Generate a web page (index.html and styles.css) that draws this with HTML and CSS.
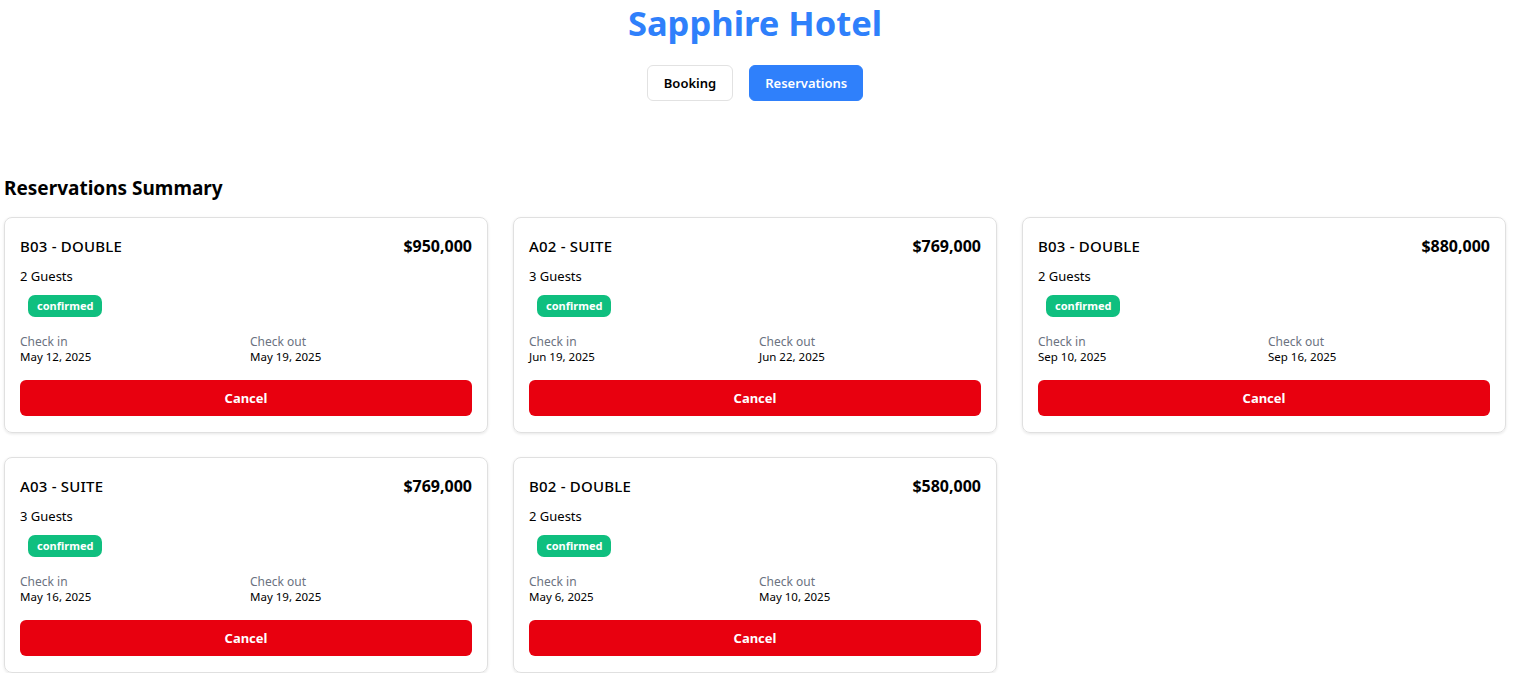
FILE: index.html
```html
<!DOCTYPE html>
<html>
<head>
<meta charset="utf-8">
<link rel="stylesheet" href="styles.css">
</head>
<body>
<div class="app">
<header class="header">
  <h1 class="brand">Sapphire Hotel</h1>
  <nav class="tabs">
    <button class="tab">Booking</button>
    <button class="tab tab-active">Reservations</button>
  </nav>
</header>
<main class="main">
  <h2 class="section-title">Reservations Summary</h2>
  <div class="grid">
    <div class="card">
      <div class="card-head"><span class="room">B03 - DOUBLE</span><span class="price">$950,000</span></div>
      <div class="guests">2 Guests</div>
      <div><span class="badge">confirmed</span></div>
      <div class="dates">
        <div><div class="label">Check in</div><div class="date">May 12, 2025</div></div>
        <div><div class="label">Check out</div><div class="date">May 19, 2025</div></div>
      </div>
      <button class="cancel">Cancel</button>
    </div>
    <div class="card">
      <div class="card-head"><span class="room">A02 - SUITE</span><span class="price">$769,000</span></div>
      <div class="guests">3 Guests</div>
      <div><span class="badge">confirmed</span></div>
      <div class="dates">
        <div><div class="label">Check in</div><div class="date">Jun 19, 2025</div></div>
        <div><div class="label">Check out</div><div class="date">Jun 22, 2025</div></div>
      </div>
      <button class="cancel">Cancel</button>
    </div>
    <div class="card">
      <div class="card-head"><span class="room">B03 - DOUBLE</span><span class="price">$880,000</span></div>
      <div class="guests">2 Guests</div>
      <div><span class="badge">confirmed</span></div>
      <div class="dates">
        <div><div class="label">Check in</div><div class="date">Sep 10, 2025</div></div>
        <div><div class="label">Check out</div><div class="date">Sep 16, 2025</div></div>
      </div>
      <button class="cancel">Cancel</button>
    </div>
    <div class="card">
      <div class="card-head"><span class="room">A03 - SUITE</span><span class="price">$769,000</span></div>
      <div class="guests">3 Guests</div>
      <div><span class="badge">confirmed</span></div>
      <div class="dates">
        <div><div class="label">Check in</div><div class="date">May 16, 2025</div></div>
        <div><div class="label">Check out</div><div class="date">May 19, 2025</div></div>
      </div>
      <button class="cancel">Cancel</button>
    </div>
    <div class="card">
      <div class="card-head"><span class="room">B02 - DOUBLE</span><span class="price">$580,000</span></div>
      <div class="guests">2 Guests</div>
      <div><span class="badge">confirmed</span></div>
      <div class="dates">
        <div><div class="label">Check in</div><div class="date">May 6, 2025</div></div>
        <div><div class="label">Check out</div><div class="date">May 10, 2025</div></div>
      </div>
      <button class="cancel">Cancel</button>
    </div>
  </div>
</main>
</div>
</body>
</html>
```

FILE: styles.css
```css
* { box-sizing: border-box; }
body {
  margin: 0;
  font-family: "Noto Sans", "Open Sans", sans-serif;
  color: #000;
  background: #fff;
}
.app {
  padding: 0 12px 0 4px;
}
.header {
  display: flex;
  flex-direction: column;
  align-items: center;
  padding-top: 1px;
}
.brand {
  margin: 0;
  font-size: 34.5px;
  line-height: 44px;
  font-weight: 700;
  color: #2f80fb;
}
.tabs {
  display: flex;
  gap: 16px;
  margin-top: 20px;
}
.tab {
  font-family: inherit;
  height: 36px;
  padding: 0 16px;
  font-size: 13px;
  font-weight: 600;
  border: 1px solid #e2e2e2;
  border-radius: 6px;
  background: #fff;
  color: #000;
}
.tab-active {
  padding: 0 15px;
  background: #2f80fb;
  border-color: #2f80fb;
  color: #fff;
}
.main {
  padding-top: 73px;
}
.section-title {
  margin: 0 0 15px;
  font-size: 19px;
  line-height: 28px;
  font-weight: 700;
}
.grid {
  display: grid;
  grid-template-columns: repeat(3, 1fr);
  column-gap: 25px;
  row-gap: 24px;
}
.card {
  border: 1px solid #e0e0e0;
  border-radius: 8px;
  padding: 16px 15px 16px;
  box-shadow: 0 1px 3px rgba(0,0,0,0.1);
  display: flex;
  flex-direction: column;
}
.card-head {
  display: flex;
  justify-content: space-between;
  align-items: center;
  height: 24px;
}
.room {
  font-size: 15px;
  font-weight: 500;
  letter-spacing: 0.2px;
}
.price {
  font-size: 16px;
  font-weight: 700;
}
.guests {
  font-size: 13px;
  margin-top: 8px;
  line-height: 20px;
}
.badge {
  display: inline-block;
  margin: 9px 0 0 8px;
  padding: 0 9px;
  height: 22px;
  line-height: 22px;
  background: #0fbf7f;
  color: #fff;
  font-size: 11px;
  font-weight: 700;
  border-radius: 7px;
}
.dates {
  display: grid;
  grid-template-columns: 1fr 1fr;
  column-gap: 8px;
  margin-top: 17px;
}
.label {
  font-size: 12px;
  line-height: 15px;
  color: #6b7280;
}
.date {
  font-size: 11.5px;
  line-height: 16px;
}
.cancel {
  font-family: inherit;
  margin-top: 15px;
  height: 36px;
  border: none;
  border-radius: 6px;
  background: #e8000f;
  color: #fff;
  font-size: 13px;
  font-weight: 700;
}
```
